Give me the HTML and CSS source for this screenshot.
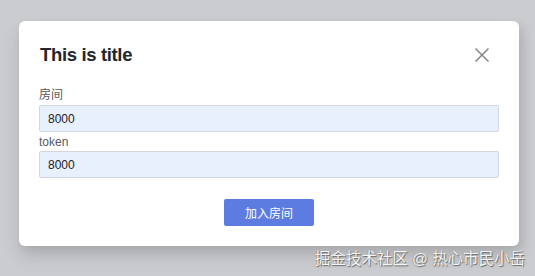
FILE: index.html
```html
<!DOCTYPE html>
<html lang="zh">
<head>
<meta charset="utf-8">
<link rel="stylesheet" href="styles.css">
</head>
<body>
<div class="stage">
  <div class="modal">
    <div class="modal-header">
      <h2 class="modal-title">This is title</h2>
      <button class="close" aria-label="close">
        <svg width="16" height="16" viewBox="0 0 16 16"><path d="M1.5 1.5 L14.5 14.5 M14.5 1.5 L1.5 14.5" stroke="#8a8a8a" stroke-width="1.6" fill="none"/></svg>
      </button>
    </div>
    <div class="modal-body">
      <label class="field-label">房间</label>
      <input class="field-input" value="8000">
      <label class="field-label second">token</label>
      <input class="field-input" value="8000">
    </div>
    <div class="modal-footer">
      <button class="primary">加入房间</button>
    </div>
  </div>
  <div class="watermark">掘金技术社区 @ 热心市民小岳</div>
</div>
</body>
</html>
```
FILE: styles.css
```css
html, body {
  margin: 0;
  padding: 0;
  background: #cbccd0;
  font-family: "Liberation Sans", "Noto Sans CJK SC", sans-serif;
}
.stage {
  width: 535px;
  height: 276px;
  padding: 21px 0 0 19px;
  box-sizing: border-box;
  position: relative;
  overflow: hidden;
}
.modal {
  width: 500px;
  height: 225px;
  box-sizing: border-box;
  background: #fff;
  border-radius: 6px;
  box-shadow: 0 10px 18px rgba(0,0,0,0.12), 4px 4px 10px rgba(0,0,0,0.08);
  padding: 20px;
  display: flex;
  flex-direction: column;
}
.modal-header {
  display: flex;
  align-items: center;
  justify-content: space-between;
  height: 24px;
  padding-top: 2px;
}
.modal-title {
  margin: 0 0 0 1px;
  font-size: 18.5px;
  letter-spacing: -0.35px;
  font-weight: bold;
  color: #23262c;
  line-height: 24px;
}
.close {
  border: 0;
  background: none;
  padding: 0;
  width: 16px;
  height: 16px;
  margin-right: 9px;
  display: flex;
}
.modal-body {
  display: flex;
  flex-direction: column;
  margin-top: 20px;
}
.field-label {
  font-size: 12px;
  line-height: 16px;
  color: #555a60;
  margin-bottom: 2px;
}
.field-label.second {
  margin-top: 2px;
  margin-bottom: 1px;
}
.field-input {
  height: 27px;
  box-sizing: border-box;
  border: 1px solid #d3d6de;
  border-radius: 2px;
  background: #e8f0fe;
  padding: 0 8px;
  font-family: "Liberation Sans", "Noto Sans CJK SC", sans-serif;
  font-size: 12px;
  color: #222;
  outline: none;
}
.modal-footer {
  display: flex;
  justify-content: center;
  margin-top: 21px;
}
.primary {
  width: 90px;
  height: 27px;
  border: 0;
  border-radius: 2px;
  background: #5c7ce2;
  color: #fff;
  font-family: "Liberation Sans", "Noto Sans CJK SC", sans-serif;
  font-size: 12px;
  padding: 0;
}
.watermark {
  position: absolute;
  right: 10px;
  bottom: 8px;
  font-size: 15.5px;
  color: #f4f4f4;
  text-shadow: 1px 1px 1px #6a6a6a, -0.5px -0.5px 0.5px #888;
}
```
